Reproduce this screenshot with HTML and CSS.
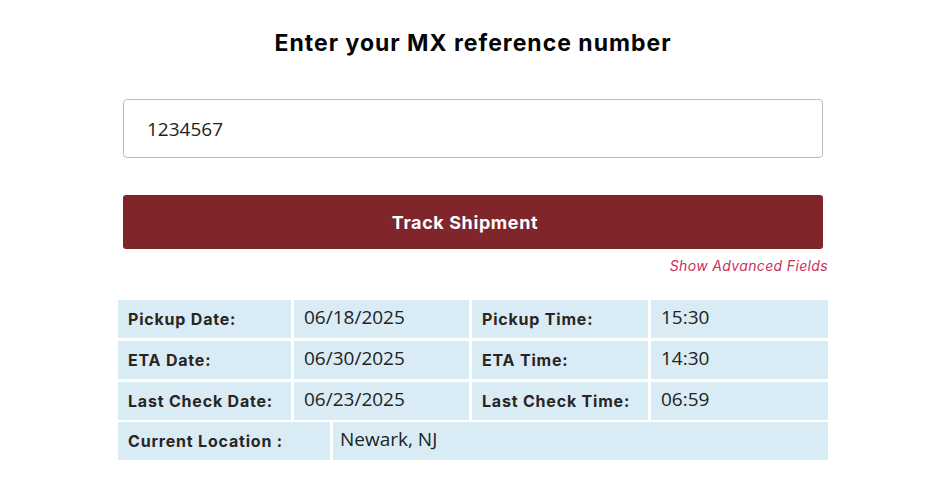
FILE: index.html
```html
<!DOCTYPE html>
<html lang="en">
<head>
  <meta charset="UTF-8" />
  <meta name="viewport" content="width=device-width, initial-scale=1.0" />
  <title>Track Shipment</title>
  <link rel="stylesheet" href="styles.css">
</head>
<body>
  <div class="tracker">
    <h1>Enter your MX reference number</h1>

    <div class="form">
      <input type="text" class="ref-input" value="1234567" aria-label="MX reference number">
      <button class="btn-track">Track Shipment</button>
      <div class="advanced">
        <a href="#">Show Advanced Fields</a>
      </div>
    </div>

    <div class="details dates">
      <div class="label">Pickup Date:</div>
      <div class="value">06/18/2025</div>
      <div class="label">Pickup Time:</div>
      <div class="value">15:30</div>

      <div class="label">ETA Date:</div>
      <div class="value">06/30/2025</div>
      <div class="label">ETA Time:</div>
      <div class="value">14:30</div>

      <div class="label">Last Check Date:</div>
      <div class="value">06/23/2025</div>
      <div class="label">Last Check Time:</div>
      <div class="value">06:59</div>
    </div>

    <div class="details location">
      <div class="label">Current Location :</div>
      <div class="value">Newark, NJ</div>
    </div>
  </div>
</body>
</html>
```

FILE: styles.css
```css
body {
  margin: 0;
  padding: 0 0 0 3px;
  background: #fff;
  color: #222;
  font-family: 'Open Sans', sans-serif;
}

.tracker {
  width: 710px;
  margin: 0 auto;
  padding-top: 29px;
}

h1 {
  margin: 0;
  text-align: center;
  font-family: 'Inter', sans-serif;
  font-weight: 700;
  font-size: 23px;
  letter-spacing: 1px;
  line-height: 28px;
  color: #050505;
}

.form {
  padding: 0 5px;
}

.ref-input {
  display: block;
  width: 100%;
  height: 59px;
  margin-top: 42px;
  padding: 0 23px;
  box-sizing: border-box;
  border: 1px solid #bdbdbd;
  border-radius: 4px;
  font-family: 'Open Sans', sans-serif;
  font-size: 19px;
  color: #222;
  outline: none;
}

.btn-track {
  display: block;
  width: 100%;
  height: 54px;
  margin-top: 37px;
  padding: 0 16px 0 0;
  border: none;
  border-radius: 3px;
  background-color: #80252a;
  color: #fff;
  font-family: 'Inter', sans-serif;
  font-weight: 700;
  font-size: 18px;
  letter-spacing: 0.6px;
  cursor: pointer;
}

.advanced {
  margin-right: -5px;
  text-align: right;
  padding-top: 7px;
  line-height: 18px;
}

.advanced a {
  font-family: 'Inter', sans-serif;
  font-style: italic;
  font-size: 14px;
  letter-spacing: 0.35px;
  color: #c8315b;
  text-decoration: none;
}

.details {
  display: grid;
  grid-template-columns: 173px 175px 176px 1fr;
  grid-auto-rows: 38px;
  gap: 3px;
  margin-top: 2px;
}

.dates {
  margin-top: 25px;
}

.location {
  grid-template-columns: 212px 1fr;
}

.label,
.value {
  background: #d9ecf5;
  padding-left: 10px;
  display: flex;
  align-items: center;
}

.label {
  font-family: 'Inter', sans-serif;
  font-weight: 700;
  font-size: 16px;
  letter-spacing: 0.8px;
  color: #2a2422;
  padding-bottom: 1px;
}

.value {
  font-size: 19px;
  color: #222;
  padding-bottom: 4px;
}

.location .value {
  padding-left: 7px;
}
```
